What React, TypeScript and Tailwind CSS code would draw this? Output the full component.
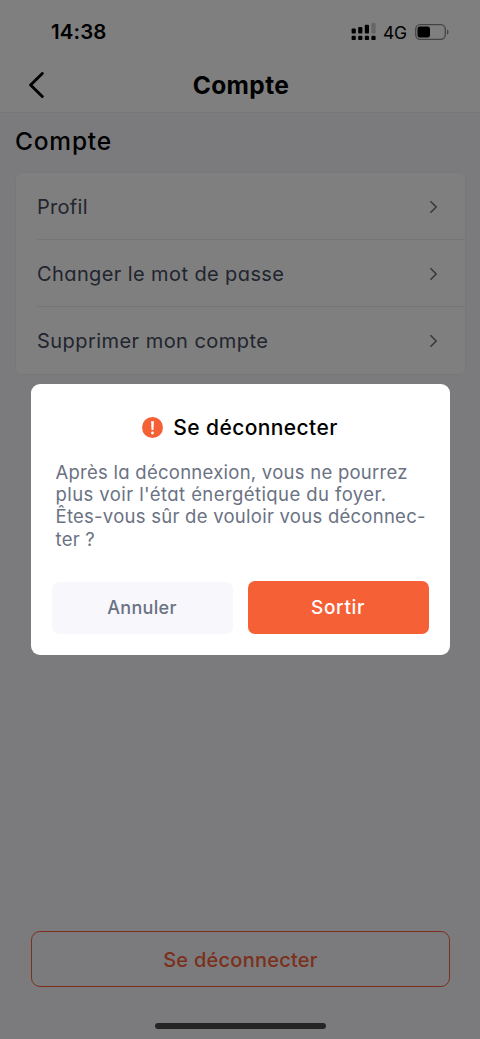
interface RowProps { label: string; spacing: string; last?: boolean; }

const rows: RowProps[] = [
  { label: "Profil", spacing: "tracking-[0.3px]" },
  { label: "Changer le mot de passe", spacing: "tracking-[0.4px]" },
  { label: "Supprimer mon compte", spacing: "tracking-[0.45px]", last: true },
];

const StatusBar = () => (
  <div className="h-[58px] pl-[51px] pr-[31px] pt-[6px] flex items-center justify-between text-black">
    <span className="text-[20.5px] font-semibold tracking-[0.1px]">14:38</span>
    <div className="flex items-center">
      <svg width="25" height="18" viewBox="0 0 25 18">
        <rect x="0.6" y="5.5" width="4.2" height="5" rx="1" />
        <rect x="7.2" y="4" width="4.2" height="6.5" rx="1" />
        <rect x="13.8" y="1.8" width="4.2" height="8.7" rx="1" />
        <rect x="20.4" y="0" width="4.2" height="10.5" rx="1" fill="#cccccc" />
        <rect x="0.6" y="12.7" width="4.2" height="4.4" rx="1.2" />
        <rect x="7.2" y="12.7" width="4.2" height="4.4" rx="1.2" />
        <rect x="13.8" y="12.7" width="4.2" height="4.4" rx="1.2" />
        <rect x="20.4" y="12.7" width="4.2" height="4.4" rx="1.2" />
      </svg>
      <span className="ml-[7px] w-[32px] pt-[2px] text-[17.5px] tracking-[-0.2px]">4G</span>
      <svg width="34" height="16" viewBox="0 0 34 16">
        <rect x="0.7" y="0.7" width="29.6" height="14.6" rx="4.5" fill="none" stroke="#898989" strokeWidth="1.3" />
        <rect x="2.5" y="2.5" width="12.5" height="11" rx="2.3" />
        <path d="M32 5.4c2 .9 2 4.3 0 5.2z" fill="#898989" />
      </svg>
    </div>
  </div>
);

const Row = ({ label, spacing, last }: RowProps) => (
  <div className="pl-[21px] h-[67px] flex">
    <div className={`flex-1 flex items-center justify-between pr-[27px] ${last ? "" : "pt-px border-b border-[#eaeaf0]"}`}>
      <span className={`text-[20px] text-[#434a5c] ${spacing}`}>{label}</span>
      <svg width="9" height="14" viewBox="0 0 9 14" fill="none" stroke="#6a6f7b" strokeWidth="1.5">
        <path d="M1.4 1.2L7.2 7l-5.8 5.8" />
      </svg>
    </div>
  </div>
);

const LogoutDialog = () => (
  <div className="absolute inset-0 bg-black/50 flex items-center justify-center">
    <div className="w-[419px] h-[271px] bg-white rounded-[9px] px-[21px] pt-[28px] pb-[21px] flex flex-col">
      <div className="h-[30px] flex items-center justify-center gap-[10px]">
        <svg width="21" height="21" viewBox="0 0 21 21">
          <circle cx="10.5" cy="10.5" r="10.5" fill="#f66036" />
          <path d="M9.1 4.3h2.8l-.45 8.8h-1.9z" fill="#fff" />
          <circle cx="10.5" cy="16" r="1.4" fill="#fff" />
        </svg>
        <h2 className="pt-[2px] text-[21px] font-medium text-black tracking-[0.4px]">Se déconnecter</h2>
      </div>
      <p className="mt-[19px] pl-[4px] text-[18.5px] leading-[22.2px] text-[#6a7283] whitespace-nowrap tracking-[0.26px]">
        Après la déconnexion, vous ne pourrez<br />
        <span className="tracking-[0.42px]">plus voir l'état énergétique du foyer.</span><br />
        Êtes-vous sûr de vouloir vous déconnec-<br />
        ter ?
      </p>
      <div className="mt-auto flex items-center gap-[15px]">
        <button className="flex-1 h-[52px] rounded-[7px] bg-[#f7f7fc] text-[#6a7283] text-[18px] font-medium tracking-[0.3px]">Annuler</button>
        <button className="flex-1 h-[53px] pt-[2px] rounded-[7px] bg-[#f66036] text-white text-[19px] font-medium tracking-[0.65px]">Sortir</button>
      </div>
    </div>
  </div>
);

const App = () => (
  <div className="relative w-[480px] h-[1039px] overflow-hidden bg-[#f7f7fc] flex flex-col font-['Inter','Liberation_Sans',sans-serif] [font-feature-settings:'cv11']">
    <header className="h-[113px] bg-white border-b border-[#eeeef4]">
      <StatusBar />
      <div className="h-[54px] flex items-center px-[28px]">
        <svg width="18" height="26" viewBox="0 0 18 26" fill="none" stroke="#000" strokeWidth="2.9" strokeLinecap="round" strokeLinejoin="round">
          <path d="M14.3 1.5L2.6 13l11.7 11.5" />
        </svg>
        <h1 className="flex-1 pt-px pr-[16px] text-center text-[24.5px] font-bold text-black tracking-[0.4px]">Compte</h1>
      </div>
    </header>
    <main className="flex-1 flex flex-col px-[15px] pt-[12px]">
      <h2 className="h-[34px] leading-[33px] text-[24.5px] font-medium text-black tracking-[0.8px]">Compte</h2>
      <section className="mt-[13px] w-[451px] bg-white rounded-[7px] border border-[#f1f1f6]">
        {rows.map((r) => <Row key={r.label} {...r} />)}
      </section>
      <button className="mt-auto mx-[16px] w-[419px] h-[56px] pt-px shrink-0 rounded-[9px] border-[1.5px] border-[#f66036] text-[#f66036] text-[20px] font-medium tracking-[0.25px]">Se déconnecter</button>
      <div className="mt-[36px] mb-[10px] w-[171px] h-[6px] shrink-0 self-center rounded-full bg-[#4a4a4a]" />
    </main>
    <LogoutDialog />
  </div>
);

export default App;
